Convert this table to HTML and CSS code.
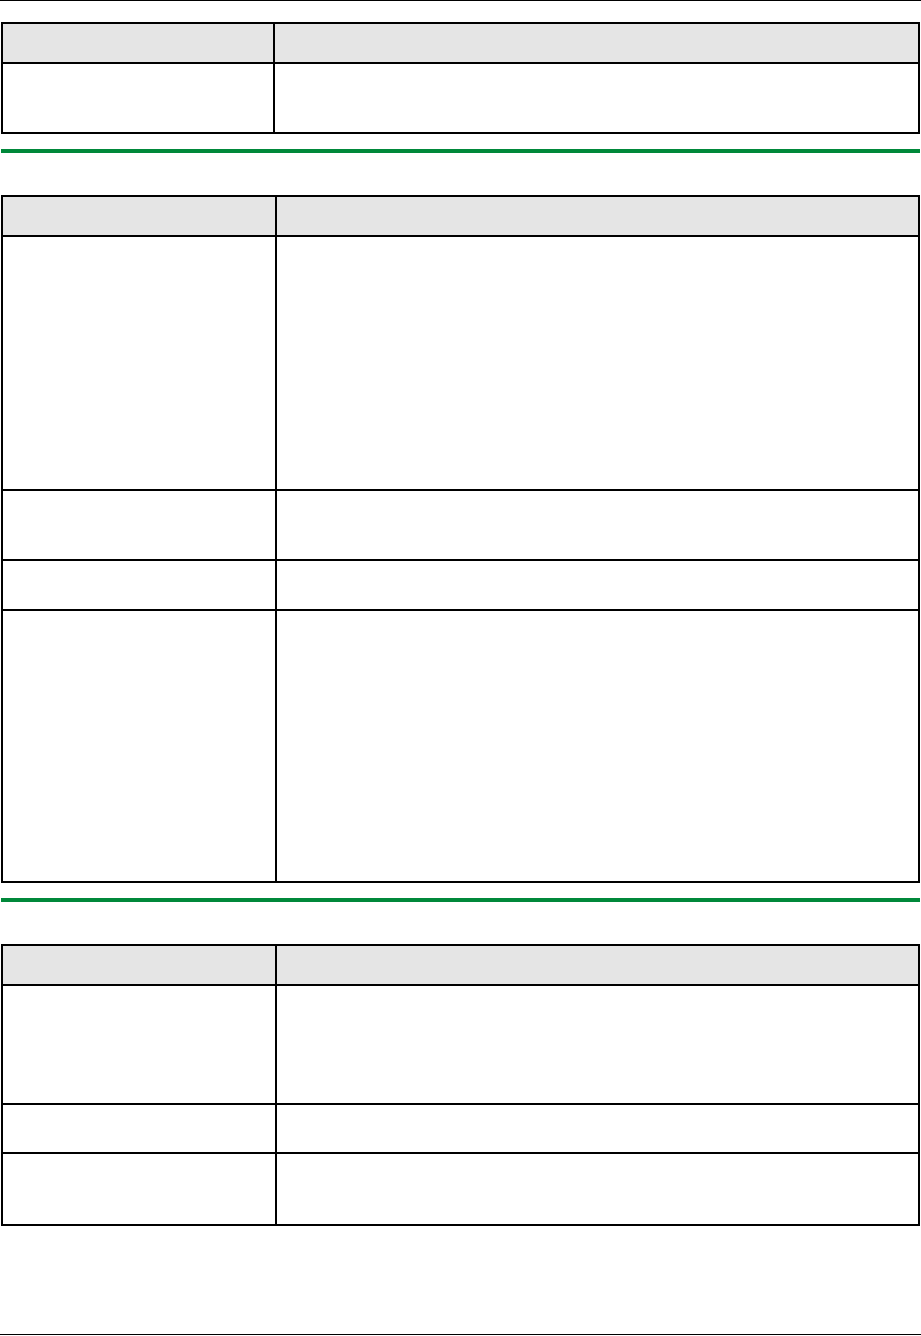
FILE: index.html
```html
<!DOCTYPE html>
<html>
<head>
<meta charset="utf-8">
<link rel="stylesheet" href="styles.css">
</head>
<body>
<div class="page">
  <div class="rule-top"></div>

  <div class="tbl tbl-1">
    <div class="row head h38"><div class="c1"></div><div class="c2"></div></div>
    <div class="row h68"><div class="c1"></div><div class="c2"></div></div>
  </div>

  <div class="green"></div>

  <div class="tbl tbl-2">
    <div class="row head h38"><div class="c1"></div><div class="c2"></div></div>
    <div class="row h252"><div class="c1"></div><div class="c2"></div></div>
    <div class="row h68"><div class="c1"></div><div class="c2"></div></div>
    <div class="row h48"><div class="c1"></div><div class="c2"></div></div>
    <div class="row h270"><div class="c1"></div><div class="c2"></div></div>
  </div>

  <div class="green"></div>

  <div class="tbl tbl-3">
    <div class="row head h38"><div class="c1"></div><div class="c2"></div></div>
    <div class="row h117"><div class="c1"></div><div class="c2"></div></div>
    <div class="row h47"><div class="c1"></div><div class="c2"></div></div>
    <div class="row h70"><div class="c1"></div><div class="c2"></div></div>
  </div>

  <div class="spacer"></div>
  <div class="rule-bottom"></div>
</div>
</body>
</html>
```

FILE: styles.css
```css
html, body {
  margin: 0;
  padding: 0;
  background: #ffffff;
  font-family: "Liberation Sans", Arial, sans-serif;
}

.page {
  width: 921px;
  height: 1336px;
  display: flex;
  flex-direction: column;
}

.rule-top {
  height: 1px;
  background: #000;
  width: 921px;
}

.tbl {
  margin-left: 1px;
  width: 919px;
  box-sizing: border-box;
  border: 2px solid #000;
  display: flex;
  flex-direction: column;
}

.tbl-1 { margin-top: 21px; }
.tbl-2, .tbl-3 { margin-top: 42px; }

.row {
  display: grid;
  grid-template-columns: 274px 1fr;
}
.tbl-1 .row { grid-template-columns: 272px 1fr; }

.row + .row { border-top: 2px solid #000; }

.row .c1 { border-right: 2px solid #000; }

.head { background: #e5e5e5; }

.h38 { height: 38px; }
.h47 { height: 47px; }
.h48 { height: 48px; }
.h68 { height: 68px; }
.h70 { height: 70px; }
.h117 { height: 117px; }
.h252 { height: 252px; }
.h270 { height: 270px; }

.green {
  margin-top: 15px;
  margin-left: 1px;
  width: 919px;
  height: 4px;
  background: #00883a;
}

.spacer { flex: 1; }

.rule-bottom {
  height: 1px;
  background: #000;
  width: 921px;
  margin-bottom: 1px;
}
```
